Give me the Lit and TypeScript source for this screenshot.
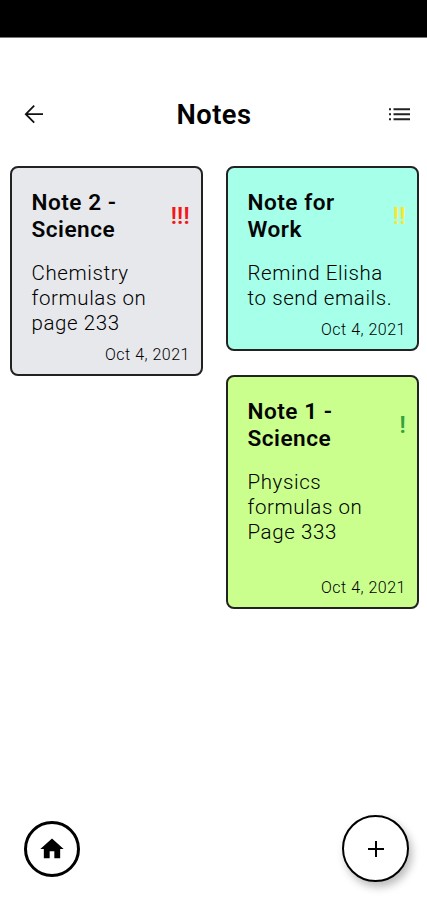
import { LitElement, html, css } from "lit";
import { customElement, property } from "lit/decorators.js";

@customElement("note-card")
class NoteCard extends LitElement {
  @property() heading = "";
  @property() body = "";
  @property() date = "";
  @property() mark = "";

  static styles = css`
    :host {
      display: flex;
      flex-direction: column;
      box-sizing: border-box;
      border: 2px solid #222;
      border-radius: 8px;
      padding: 21px 11px 9px 19.5px;
      color: #050505;
    }
    .top {
      display: flex;
      align-items: center;
      justify-content: space-between;
      margin-bottom: 18px;
    }
    .heading {
      width: 110px;
      font-size: 22.6px;
      line-height: 27px;
      font-weight: 600;
      letter-spacing: 0.5px;
      white-space: pre-line;
    }
    .mark {
      font-size: 23px;
      line-height: 27px;
      font-weight: 600;
      letter-spacing: 0.3px;
      color: var(--mark);
    }
    .body {
      font-size: 20.5px;
      line-height: 25px;
      font-weight: 300;
      letter-spacing: 0.6px;
      white-space: pre-line;
      color: #000;
    }
    .date {
      margin-top: auto;
      text-align: right;
      font-size: 16px;
      line-height: 20px;
      font-weight: 300;
      letter-spacing: 0.5px;
      color: #000;
    }
  `;

  render() {
    return html`
      <div class="top">
        <div class="heading">${this.heading}</div>
        <div class="mark">${this.mark}</div>
      </div>
      <div class="body">${this.body}</div>
      <div class="date">${this.date}</div>
    `;
  }
}

@customElement("app-root")
class AppRoot extends LitElement {
  static styles = css`
    :host {
      display: flex;
      flex-direction: column;
      box-sizing: border-box;
      height: 900px;
      background: #fff;
      overflow: hidden;
      font-family: Roboto, sans-serif;
      color: #000;
    }
    svg {
      display: block;
    }
    .status {
      flex: none;
      height: 37px;
      background: #000;
      border-bottom: 1px solid #777;
    }
    header {
      flex: none;
      display: grid;
      grid-template-columns: 28px 1fr 28px;
      align-items: center;
      height: 40px;
      margin: 56px 14px 0 20px;
    }
    h1 {
      margin: 0;
      padding: 2px 5px 0 0;
      text-align: center;
      font-size: 27.3px;
      line-height: 38px;
      font-weight: 600;
      letter-spacing: 0.5px;
    }
    main {
      flex: 1;
      display: grid;
      grid-template-columns: 193px 193px;
      column-gap: 23px;
      align-items: start;
      padding: 32px 0 0 10px;
    }
    .column {
      display: flex;
      flex-direction: column;
      gap: 24px;
    }
    .gray {
      height: 210px;
      background: #e7e8ec;
      --mark: #f01818;
    }
    .aqua {
      height: 185px;
      background: #a6ffe9;
      --mark: #ffe62b;
    }
    .lime {
      height: 234px;
      background: #caff8e;
      --mark: #2fa33f;
    }
    footer {
      flex: none;
      display: flex;
      justify-content: space-between;
      align-items: center;
      padding: 0 18px 18px 24px;
    }
    .round {
      box-sizing: border-box;
      display: grid;
      place-items: center;
      padding: 0;
      border: 3px solid #000;
      border-radius: 50%;
      background: #fff;
      width: 56px;
      height: 56px;
    }
    .add {
      width: 67px;
      height: 67px;
      border-width: 2px;
      box-shadow: 3px 5px 9px rgba(0, 0, 0, 0.27);
    }
  `;

  render() {
    return html`
      <div class="status"></div>
      <header>
        <svg width="28" height="28" viewBox="0 0 28 28" fill="none" stroke="#111" stroke-width="1.8">
          <path d="M23 14.2H6M14.2 5.7L5.8 14.2L14.2 22.7" />
        </svg>
        <h1>Notes</h1>
        <svg width="28" height="28" viewBox="0 0 28 28" fill="#222">
          <path
            d="M4 8.2h2v2H4zM4 13.2h2v2H4zM4 18.2h2v2H4zM8.5 8.2H25v2H8.5zM8.5 13.2H25v2H8.5zM8.5 18.2H25v2H8.5z"
          />
        </svg>
      </header>
      <main>
        <div class="column">
          <note-card
            class="gray"
            heading=${"Note 2 -\nScience"}
            body=${"Chemistry\nformulas on\npage 233"}
            date="Oct 4, 2021"
            mark="!!!"
          ></note-card>
        </div>
        <div class="column">
          <note-card
            class="aqua"
            heading=${"Note for\nWork"}
            body=${"Remind Elisha\nto send emails."}
            date="Oct 4, 2021"
            mark="!!"
          ></note-card>
          <note-card
            class="lime"
            heading=${"Note 1 -\nScience"}
            body=${"Physics\nformulas on\nPage 333"}
            date="Oct 4, 2021"
            mark="!"
          ></note-card>
        </div>
      </main>
      <footer>
        <button class="round" aria-label="Home">
          <svg width="28" height="28" viewBox="0 0 24 24" fill="#000">
            <path d="M10 20v-6h4v6h5v-8h3L12 3 2 12h3v8z" />
          </svg>
        </button>
        <button class="round add" aria-label="Add note">
          <svg width="18" height="18" viewBox="0 0 18 18" fill="none" stroke="#000" stroke-width="2">
            <path d="M9 1v16M1 9h16" />
          </svg>
        </button>
      </footer>
    `;
  }
}
